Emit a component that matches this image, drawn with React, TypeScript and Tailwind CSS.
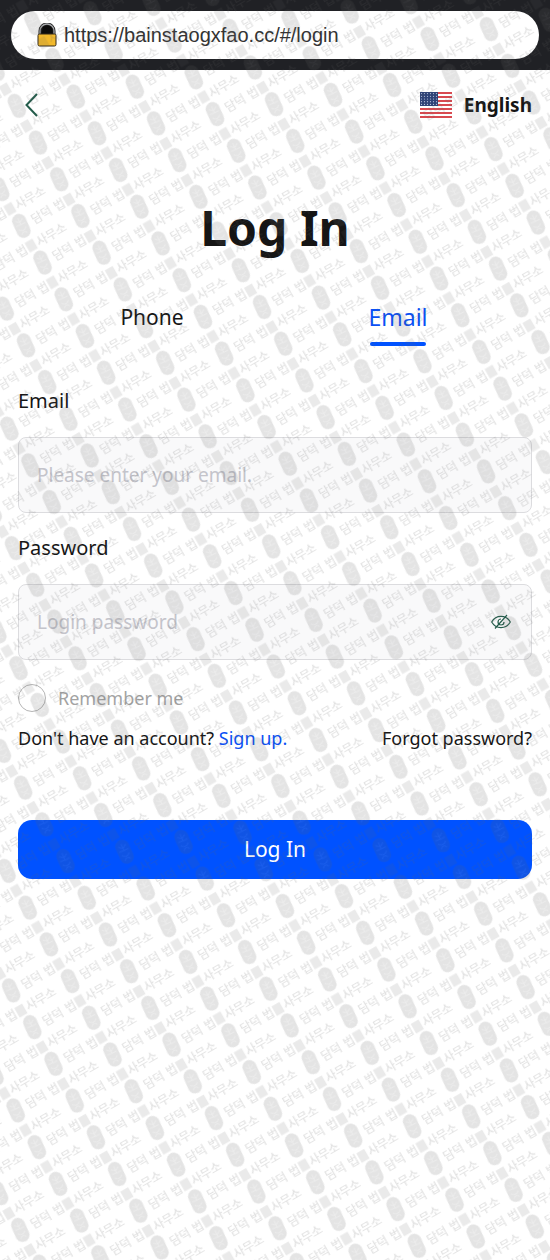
import { useState } from 'react';

const PITCH_X = 111.8;
const PITCH_Y = 42.4;

const Mark = ({ x, y }: { x: number; y: number }) => (
  <g transform={`translate(${x} ${y})`}>
    <g transform="rotate(6)">
      <rect x="-7" y="-13" width="14" height="25" rx="7" opacity="0.9" />
      <g fill="none" stroke="#fff" strokeWidth="1" opacity="0.3">
        <path d="M-4 -7 L0 -4 L4 -7 M0 -9 V-1 M-5 -2 H5 M-4 2 C-2 5 2 5 4 2 M-3 8 C-1 5 1 5 3 8" />
      </g>
    </g>
    <g fontSize="12" stroke="#606060" strokeWidth="0.2">
      <text x="12" y="5">담덕</text>
      <text x="38" y="5">법</text>
      <text x="61" y="5">사무소</text>
    </g>
    <rect x="50" y="-5" width="9" height="11" opacity="0.7" />
  </g>
);

const Watermark = () => (
  <svg
    className="pointer-events-none absolute inset-0 h-full w-full font-['Noto_Sans_CJK_KR',sans-serif]"
    aria-hidden="true"
  >
    <defs>
      <pattern
        id="watermark"
        width={PITCH_X}
        height={PITCH_Y}
        patternUnits="userSpaceOnUse"
        patternTransform="translate(76 97) rotate(-30) translate(-10 -13)"
      >
        <g fill="#606060">
          <Mark x={10} y={13} />
          <Mark x={66} y={34} />
          <Mark x={66 - PITCH_X} y={34} />
          <Mark x={66} y={34 - PITCH_Y} />
          <Mark x={66 - PITCH_X} y={34 - PITCH_Y} />
        </g>
      </pattern>
    </defs>
    <rect width="100%" height="100%" fill="url(#watermark)" opacity="0.19" />
  </svg>
);

const LockIcon = () => (
  <svg width="20" height="24" viewBox="0 0 20 24" aria-hidden="true">
    <path d="M3 12 V8 a7 7 0 0 1 14 0 V12 Z" fill="#0b0b0b" />
    <path d="M3 12 V8 a7 7 0 0 1 14 0 V12" fill="none" stroke="#1c1c1c" strokeWidth="3" />
    <path d="M3 12 V8 a7 7 0 0 1 14 0 V12" fill="none" stroke="#a9abae" strokeWidth="1.300" />
    <rect x="1" y="11" width="18" height="12" rx="1.500" fill="#f2b92c" stroke="#33291a" strokeWidth="1" />
  </svg>
);

const stripes = [0, 2, 4, 6, 8, 10, 12];
const starRows = [0, 1, 2, 3, 4];
const starCols = [0, 1, 2, 3, 4, 5];

const FlagIcon = () => (
  <svg width="32" height="26" viewBox="0 0 32 26" aria-hidden="true">
    <rect width="32" height="26" fill="#fff" />
    {stripes.map((n) => (
      <rect key={n} y={n * 2} width="32" height="2" fill="#d84a50" />
    ))}
    <rect width="18" height="14" fill="#2f4377" />
    {starRows.map((r) =>
      starCols.map((c) => (
        <circle key={`${r}-${c}`} cx={1.5 + c * 3} cy={1.6 + r * 2.7} r="0.6" fill="#b9c3dc" />
      ))
    )}
  </svg>
);

const EyeOffIcon = () => (
  <svg width="20" height="16" viewBox="0 0 20 16" fill="none" stroke="#245c4b" strokeWidth="1.200" aria-hidden="true">
    <path d="M0.700 8 C5 0.500 15 0.500 19.300 8 C15 15.500 5 15.500 0.700 8 Z" />
    <path d="M10 5 A3 3 0 1 0 13 8" />
    <path d="M16 1 L4 14.500" />
  </svg>
);

const App = () => {
  const [tab, setTab] = useState('email');
  const [account, setAccount] = useState('');
  const [password, setPassword] = useState('');
  const [showPassword, setShowPassword] = useState(false);
  const [remember, setRemember] = useState(false);

  const tabs = [
    { id: 'phone', label: 'Phone' },
    { id: 'email', label: 'Email' },
  ];

  return (
    <div className="relative min-h-screen bg-white font-['Noto_Sans',sans-serif] text-[#151515]">
      <header className="bg-[#202125] p-[11px]">
        <div className="flex h-12 items-center gap-[7px] rounded-full bg-white px-[26px] font-['Liberation_Sans',Arial,sans-serif] text-[20px] text-[#333]">
          <LockIcon />
          <span>https://bainstaogxfao.cc/#/login</span>
        </div>
      </header>

      <main className="px-[18px]">
        <nav className="flex h-[70px] items-center justify-between">
          <button type="button" aria-label="Back" className="pl-[7px]">
            <svg width="13" height="24" viewBox="0 0 13 24" fill="none" stroke="#245c4b" strokeWidth="2" aria-hidden="true">
              <path d="M12 1 L1.500 12 L12 23" />
            </svg>
          </button>
          <button type="button" className="flex items-center gap-3 text-[19px] font-bold">
            <FlagIcon />
            English
          </button>
        </nav>

        <h1 className="mt-14 text-center text-[48px] leading-[64px] font-bold">Log In</h1>

        <div className="mt-[35px] flex h-[60px] px-[11px]" role="tablist">
          {tabs.map((t) => (
            <button
              key={t.id}
              type="button"
              role="tab"
              aria-selected={tab === t.id}
              onClick={() => setTab(t.id)}
              className="flex flex-1 flex-col items-center"
            >
              {tab === t.id ? (
                <>
                  <span className="text-[23px] leading-[44px] text-[#0a50f5]">{t.label}</span>
                  <span className="mt-[3px] h-1 w-14 rounded-full bg-[#0052ff]" />
                </>
              ) : (
                <span className="text-[21px] leading-[44px]">{t.label}</span>
              )}
            </button>
          ))}
        </div>

        <form onSubmit={(e) => e.preventDefault()}>
          <label htmlFor="account" className="mt-[30px] block text-[20px] leading-8">
            Email
          </label>
          <input
            id="account"
            type="text"
            value={account}
            onChange={(e) => setAccount(e.target.value)}
            placeholder="Please enter your email."
            className="mt-5 block h-[76px] w-full rounded-lg border border-[#dcdcdf] bg-[#f9f9fa] px-[18px] text-[19px] placeholder:text-[#c4c4cb]"
          />

          <label htmlFor="password" className="mt-[19px] block text-[20px] leading-8">
            Password
          </label>
          <div className="mt-5 flex h-[76px] items-center rounded-lg border border-[#dcdcdf] bg-[#f9f9fa] pr-5 pl-[18px]">
            <input
              id="password"
              type={showPassword ? 'text' : 'password'}
              value={password}
              onChange={(e) => setPassword(e.target.value)}
              placeholder="Login password"
              className="min-w-0 flex-1 bg-transparent text-[19px] placeholder:text-[#c4c4cb]"
            />
            <button type="button" aria-label="Show password" onClick={() => setShowPassword(!showPassword)}>
              <EyeOffIcon />
            </button>
          </div>

          <label className="mt-6 flex items-center gap-3 text-[18px] leading-7 text-[#a3a3a3]">
            <input
              type="checkbox"
              checked={remember}
              onChange={(e) => setRemember(e.target.checked)}
              className="size-7 appearance-none rounded-full border border-[#b5b5b5] checked:bg-[#0052ff]"
            />
            Remember me
          </label>

          <div className="mt-3 flex justify-between text-[18px] leading-7">
            <p>
              Don't have an account?{' '}
              <a href="#/register" className="text-[#0a50f5]">Sign up.</a>
            </p>
            <a href="#/forgot">Forgot password?</a>
          </div>

          <button type="submit" className="mt-[68px] h-[59px] w-full rounded-[14px] bg-[#0052ff] text-[21px] text-white">
            Log In
          </button>
        </form>
      </main>

      <Watermark />
    </div>
  );
};

export default App;
